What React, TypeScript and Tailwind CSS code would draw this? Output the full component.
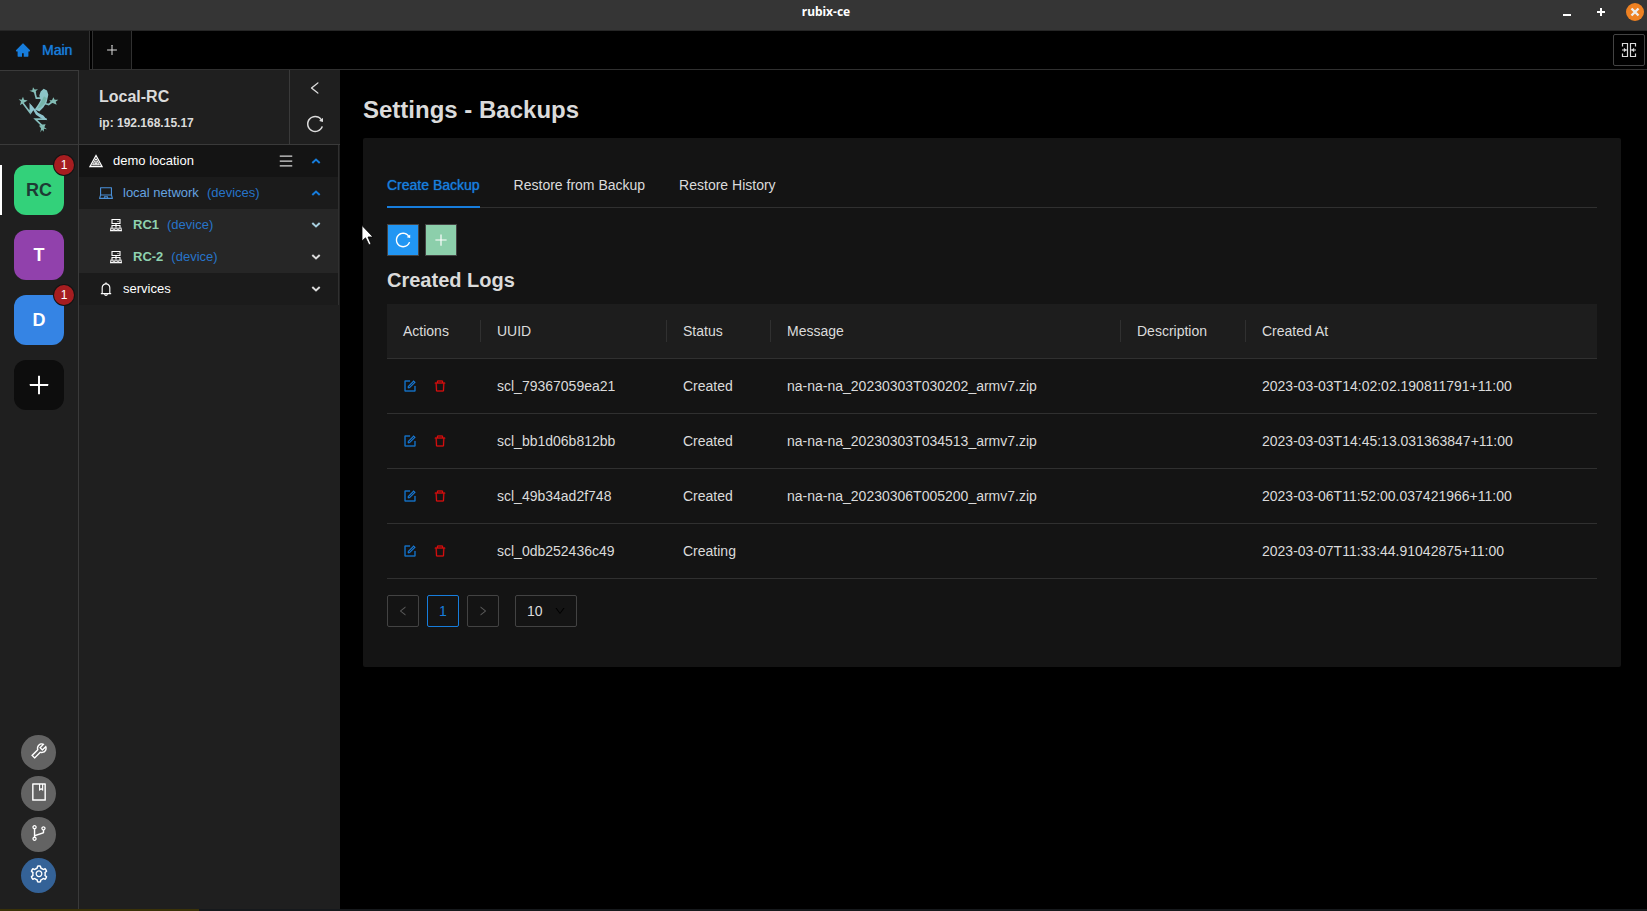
import type { ReactNode } from "react";
import {
  AiFillHome,
  AiOutlineBell,
  AiOutlineBook,
  AiOutlineBranches,
  AiOutlineDelete,
  AiOutlineDown,
  AiOutlineForm,
  AiOutlineLaptop,
  AiOutlineLeft,
  AiOutlineMenu,
  AiOutlinePlus,
  AiOutlineReload,
  AiOutlineRight,
  AiOutlineSetting,
  AiOutlineTool,
} from "react-icons/ai";

const rows = [
  { uuid: "scl_79367059ea21", status: "Created", message: "na-na-na_20230303T030202_armv7.zip", at: "2023-03-03T14:02:02.190811791+11:00" },
  { uuid: "scl_bb1d06b812bb", status: "Created", message: "na-na-na_20230303T034513_armv7.zip", at: "2023-03-03T14:45:13.031363847+11:00" },
  { uuid: "scl_49b34ad2f748", status: "Created", message: "na-na-na_20230306T005200_armv7.zip", at: "2023-03-06T11:52:00.037421966+11:00" },
  { uuid: "scl_0db252436c49", status: "Creating", message: "", at: "2023-03-07T11:33:44.91042875+11:00" },
];

const columns = ["Actions", "UUID", "Status", "Message", "Description", "Created At"];

function Frog() {
  return (
    <svg viewBox="24 34 126 140" className="h-[47px] w-[42px]" aria-hidden="true">
      <g fill="none" stroke="#86bfbe" strokeWidth="5" strokeLinejoin="miter">
        <path d="M94 70 L79 70 L73 48" />
        <path d="M104 86 L116 89 L128 80" />
        <path d="M38 84 L60 113 L62 90" />
        <path d="M110 133 L76 133 L100 156" />
      </g>
      <path d="M92 50 L101 42 L111 47 L115 60 L110 82 L100 98 L88 110 L74 104 L84 90 L92 76 L88 62 Z" fill="#8cc5c8" />
      <path d="M102 64 L110 70 L104 86 L92 98 L82 102 L92 84 Z" fill="#76b5aa" />
      <path d="M58 84 L76 104 L84 114 L100 122 L112 136 L98 133 L78 120 L70 106 L62 118 Z" fill="#8fc4cd" />
      <g fill="#83bdb5">
        <path d="M72 53 L58 48 L67 46 L69 37 L74 44 L84 43 L77 49 L79 56 Z" />
        <path d="M38 86 L30 91 L33 80 L26 73 L35 75 L39 66 L42 75 L53 77 L44 82 Z" />
        <path d="M124 84 L118 76 L126 76 L130 67 L134 75 L145 75 L137 81 L140 90 L130 85 Z" />
        <path d="M98 149 L107 148 L103 157 L111 163 L102 162 L101 171 L96 165 L91 173 L93 160 L87 153 Z" />
      </g>
    </svg>
  );
}

function PyramidIcon() {
  return (
    <svg viewBox="0 0 14 14" className="size-3.5" fill="none" stroke="currentColor" aria-hidden="true">
      <path d="M7 1.5 L13 12.5 H1 Z" strokeWidth="1.3" />
      <path d="M7 4.6 L10.4 10.7 H3.6 Z" strokeWidth="1" />
      <path d="M7 7.2 L8.4 9.4 H5.6 Z" strokeWidth="1" />
    </svg>
  );
}

function DeviceIcon() {
  return (
    <svg viewBox="0 0 14 14" className="size-3.5" fill="none" stroke="currentColor" aria-hidden="true">
      <path d="M3 1.5 H11 V5.5 H3 Z M8.5 3.5 H9.5 M7 5.5 V9 M3 9.5 V7.5 H11 V9.5" strokeWidth="1.1" />
      <path d="M1.6 12.6 L2 10 H4 L4.4 12.6 Z M5.6 12.6 L6 10 H8 L8.4 12.6 Z M9.6 12.6 L10 10 H12 L12.4 12.6 Z" strokeWidth="1.1" />
    </svg>
  );
}

function Caret({ up = false }: { up?: boolean }) {
  return (
    <svg viewBox="0 0 10 6" className="h-1.5 w-2.5" fill="none" stroke="currentColor" strokeWidth="2" aria-hidden="true">
      <path d={up ? "M1.3 5 L5 1.6 L8.7 5" : "M1.3 1 L5 4.4 L8.7 1"} />
    </svg>
  );
}

function SplitIcon() {
  return (
    <svg viewBox="0 0 16 16" className="size-4" fill="none" stroke="currentColor" strokeWidth="1.2" aria-hidden="true">
      <path d="M1.5 4.5 V1.5 H6.5 V14.5 H1.5 V11.5 M14.5 4.5 V1.5 H9.5 V14.5 H14.5 V11.5" />
      <path d="M1 8 H6.5 M9.5 8 H15" />
      <path d="M3 6 L5.2 8 L3 10 Z M13 6 L10.8 8 L13 10 Z" fill="currentColor" strokeWidth="0.3" />
    </svg>
  );
}

function TreeRow(props: {
  icon: ReactNode;
  label: string;
  kind?: string;
  className: string;
  labelClass: string;
  caretClass: string;
  open?: boolean;
  menu?: boolean;
}) {
  return (
    <li className={"flex h-8 items-center pr-[17px] text-[13px] " + props.className}>
      <span className="mr-2.5 flex size-3.5 items-center justify-center">{props.icon}</span>
      <span className={props.labelClass}>{props.label}</span>
      {props.kind && <span className="ml-2 text-[#2674c9]">{props.kind}</span>}
      <span className="ml-auto flex items-center gap-[17px]">
        {props.menu && (
          <button type="button" aria-label="Location menu" className="text-[#d6d6d6]">
            <AiOutlineMenu className="size-4" />
          </button>
        )}
        <button type="button" aria-label={"Toggle " + props.label} className={props.caretClass}>
          <Caret up={props.open} />
        </button>
      </span>
    </li>
  );
}

function Workspace({ label, className, badge }: { label: string; className: string; badge?: string }) {
  return (
    <button type="button" className={"relative flex size-[50px] items-center justify-center rounded-xl text-lg font-bold " + className}>
      {label}
      {badge && (
        <span className="absolute -top-2.5 -right-2.5 flex size-5 items-center justify-center rounded-full bg-[#a61d20] text-xs font-normal text-white ring-1 ring-[#141414]">
          {badge}
        </span>
      )}
    </button>
  );
}

function RoundButton({ label, className, children }: { label: string; className: string; children: ReactNode }) {
  return (
    <button type="button" aria-label={label} className={"flex size-[35px] items-center justify-center rounded-full pb-1 text-xl text-white " + className}>
      {children}
    </button>
  );
}

export default function App() {
  return (
    <div className="relative flex min-h-screen flex-col bg-black font-['Liberation_Sans',Arial,sans-serif] text-sm text-[#dbdbdb]">
      <header className="flex h-[31px] items-center border-b border-[#262626] bg-[#353535] pr-[3px] pb-1.5 pl-2">
        <div className="flex-1" />
        <h1 className="font-['Noto_Sans',sans-serif] text-xs font-bold text-white">rubix-ce</h1>
        <div className="flex flex-1 items-center justify-end">
          <button type="button" aria-label="Minimize" className="mr-6 text-white">
            <svg viewBox="0 0 10 10" className="size-2.5" stroke="currentColor" strokeWidth="2"><path d="M1 8 H9" /></svg>
          </button>
          <button type="button" aria-label="Maximize" className="mr-5 text-white">
            <svg viewBox="0 0 10 10" className="size-2.5" stroke="currentColor" strokeWidth="2"><path d="M1 5 H9 M5 1 V9" /></svg>
          </button>
          <button type="button" aria-label="Close" className="flex size-[18px] items-center justify-center rounded-full bg-[#ee8122] text-[#ececec]">
            <svg viewBox="0 0 10 10" className="size-2.5" stroke="currentColor" strokeWidth="2.4"><path d="M1.5 1.5 L8.5 8.5 M8.5 1.5 L1.5 8.5" /></svg>
          </button>
        </div>
      </header>

      <nav className="flex h-[39px]" aria-label="Windows">
        <button type="button" className="flex w-[90px] items-center gap-[11px] border-r border-[#303030] bg-[#141414] pb-px pl-[15px] text-[#177ddc]">
          <AiFillHome className="size-4" />
          <span className="[text-shadow:0_0_1px_#177ddc]">Main</span>
        </button>
        <div className="flex flex-1 border-b border-[#303030] pl-0.5">
          <button type="button" aria-label="New tab" className="flex w-10 items-center justify-center border-x border-[#303030] bg-[#0a0a0a]">
            <AiOutlinePlus className="size-3.5" />
          </button>
          <button type="button" aria-label="Split view" className="mt-[3px] mr-0.5 ml-auto flex size-8 items-center justify-center rounded-xs border border-[#434343]">
            <SplitIcon />
          </button>
        </div>
      </nav>

      <div className="flex flex-1">
        <aside className="flex w-[79px] flex-col items-center border-r border-[#3a3a3a] bg-[#1f1f1f]">
          <div className="flex h-[75px] w-full items-center justify-center border-y border-[#3a3a3a] pt-1">
            <Frog />
          </div>
          <div className="flex w-full flex-col gap-[15px] pt-5">
            <div className="flex border-l-2 border-white pl-3">
              <Workspace label="RC" className="bg-[#33d17a] text-[#1e3a34]" badge="1" />
            </div>
            <div className="flex pl-3.5">
              <Workspace label="T" className="bg-[#9141ac] text-white" />
            </div>
            <div className="flex pl-3.5">
              <Workspace label="D" className="bg-[#3584e4] text-white" badge="1" />
            </div>
            <div className="flex pl-3.5">
              <button type="button" aria-label="Add connection" className="flex size-[50px] items-center justify-center rounded-xl bg-[#0d0d0d] text-white">
                <AiOutlinePlus className="size-[26px]" />
              </button>
            </div>
          </div>
          <div className="mt-auto flex flex-col gap-1.5 pr-px pb-4">
            <RoundButton label="Tools" className="bg-[#636363]"><AiOutlineTool /></RoundButton>
            <RoundButton label="Documentation" className="bg-[#636363]"><AiOutlineBook /></RoundButton>
            <RoundButton label="Flows" className="bg-[#636363]"><AiOutlineBranches /></RoundButton>
            <RoundButton label="Settings" className="bg-[#346297]"><AiOutlineSetting /></RoundButton>
          </div>
        </aside>

        <section className="w-[261px] bg-[#1f1f1f]" aria-label="Explorer">
          <div className="flex h-[75px] border-b border-[#3a3a3a]">
            <div className="flex flex-1 flex-col justify-center gap-1 pt-1 pl-5 font-bold">
              <h2 className="text-base">Local-RC</h2>
              <p className="text-xs leading-5">ip: 192.168.15.17</p>
            </div>
            <div className="flex w-[51px] flex-col items-center border-l border-[#3a3a3a] pt-2.5 pr-px">
              <button type="button" aria-label="Collapse panel"><AiOutlineLeft className="size-4" /></button>
              <button type="button" aria-label="Refresh" className="mt-[18px]"><AiOutlineReload className="size-5" /></button>
            </div>
          </div>
          <ul className="mr-px border-r border-[#303030] text-white">
            <TreeRow icon={<PyramidIcon />} label="demo location" className="bg-[#141414] pl-2.5" labelClass="" caretClass="text-[#177ddc]" open menu />
            <TreeRow icon={<AiOutlineLaptop className="size-4 shrink-0 text-[#4a90d9]" />} label="local network" kind="(devices)" className="bg-[#1b1b1b] pl-5" labelClass="text-[#65a3e0]" caretClass="text-[#177ddc]" open />
            <TreeRow icon={<DeviceIcon />} label="RC1" kind="(device)" className="bg-[#262626] pl-[30px]" labelClass="font-bold text-[#8fd2b0]" caretClass="text-[#a8cfdf]" />
            <TreeRow icon={<DeviceIcon />} label="RC-2" kind="(device)" className="bg-[#262626] pl-[30px]" labelClass="font-bold text-[#8fd2b0]" caretClass="text-[#dbdbdb]" />
            <TreeRow icon={<AiOutlineBell className="size-4 shrink-0" />} label="services" className="bg-[#1b1b1b] pl-5" labelClass="" caretClass="text-[#dbdbdb]" />
          </ul>
        </section>

        <main className="flex-1 pt-6 pr-[26px] pl-[23px]">
          <h2 className="text-2xl leading-8 font-bold">Settings - Backups</h2>
          <div className="mt-3 rounded-xs bg-[#141414] px-6 pt-6 pb-10">
            <div role="tablist" className="flex h-[46px] gap-[34px] border-b border-[#303030]">
              <button type="button" role="tab" aria-selected="true" className="-mb-px border-b-2 border-[#177ddc] pt-0.5 text-[#177ddc] [text-shadow:0_0_1px_#177ddc]">
                Create Backup
              </button>
              <button type="button" role="tab" aria-selected="false">Restore from Backup</button>
              <button type="button" role="tab" aria-selected="false">Restore History</button>
            </div>

            <div className="mt-4 flex gap-1.5">
              <button type="button" aria-label="Refresh backups" className="flex size-8 items-center justify-center border border-[#434343] bg-[#2196f3] text-white">
                <AiOutlineReload className="size-[18px]" />
              </button>
              <button type="button" aria-label="Create backup" className="flex size-8 items-center justify-center border border-[#434343] bg-[#8ccfab] text-white">
                <AiOutlinePlus className="size-4" />
              </button>
            </div>

            <h3 className="mt-2.5 text-xl leading-7 font-bold">Created Logs</h3>

            <table className="mt-2.5 w-full table-fixed border-separate border-spacing-0 text-left">
              <colgroup>
                <col className="w-[94px]" />
                <col className="w-[186px]" />
                <col className="w-[104px]" />
                <col className="w-[350px]" />
                <col className="w-[125px]" />
                <col />
              </colgroup>
              <thead>
                <tr>
                  {columns.map((name, i) => (
                    <th key={name} scope="col" className="h-[55px] border-b border-[#303030] bg-[#1d1d1d] p-0 font-normal">
                      <div className={i < columns.length - 1 ? "border-r border-[#303030] pl-4 leading-[22px]" : "pl-4 leading-[22px]"}>{name}</div>
                    </th>
                  ))}
                </tr>
              </thead>
              <tbody>
                {rows.map((row) => (
                  <tr key={row.uuid}>
                    <td className="h-[55px] border-b border-[#303030] p-0 pl-4">
                      <div className="flex gap-4">
                        <button type="button" aria-label={"Edit " + row.uuid} className="text-[#177ddc]"><AiOutlineForm className="size-3.5" strokeWidth="20" /></button>
                        <button type="button" aria-label={"Delete " + row.uuid} className="text-[#e00f0f]"><AiOutlineDelete className="size-3.5" strokeWidth="20" /></button>
                      </div>
                    </td>
                    <td className="border-b border-[#303030] p-0 pl-4">{row.uuid}</td>
                    <td className="border-b border-[#303030] p-0 pl-4">{row.status}</td>
                    <td className="border-b border-[#303030] p-0 pl-4">{row.message}</td>
                    <td className="border-b border-[#303030] p-0 pl-4" />
                    <td className="border-b border-[#303030] p-0 pl-4">{row.at}</td>
                  </tr>
                ))}
              </tbody>
            </table>

            <div className="mt-4 flex gap-2">
              <button type="button" aria-label="Previous page" className="flex size-8 items-center justify-center rounded-xs border border-[#434343] text-[#5a5a5a]">
                <AiOutlineLeft className="size-3" />
              </button>
              <button type="button" aria-current="page" className="flex size-8 items-center justify-center rounded-xs border border-[#177ddc] text-[#177ddc]">1</button>
              <button type="button" aria-label="Next page" className="flex size-8 items-center justify-center rounded-xs border border-[#434343] text-[#5a5a5a]">
                <AiOutlineRight className="size-3" />
              </button>
              <div className="relative ml-2 flex">
                <select aria-label="Rows per page" defaultValue="10" className="h-8 w-[62px] appearance-none rounded-xs border border-[#434343] bg-transparent pl-[11px]">
                  <option>10</option>
                  <option>20</option>
                  <option>50</option>
                </select>
                <AiOutlineDown className="pointer-events-none absolute top-2.5 right-[11px] size-3 text-black" />
              </div>
            </div>
          </div>
        </main>
      </div>

      <footer className="flex h-0.5 bg-[#16191c]">
        <div className="w-[199px] bg-[#3a3208]" />
      </footer>

      <svg viewBox="0 0 14 22" className="pointer-events-none absolute top-[225px] left-[361px] h-[22px] w-3.5" aria-hidden="true">
        <path d="M1 0.5 V16 L4.5 12.8 L8 20 L10 19 L7 12 H12 Z" fill="#fff" stroke="#000" strokeWidth="0.8" />
      </svg>
    </div>
  );
}
